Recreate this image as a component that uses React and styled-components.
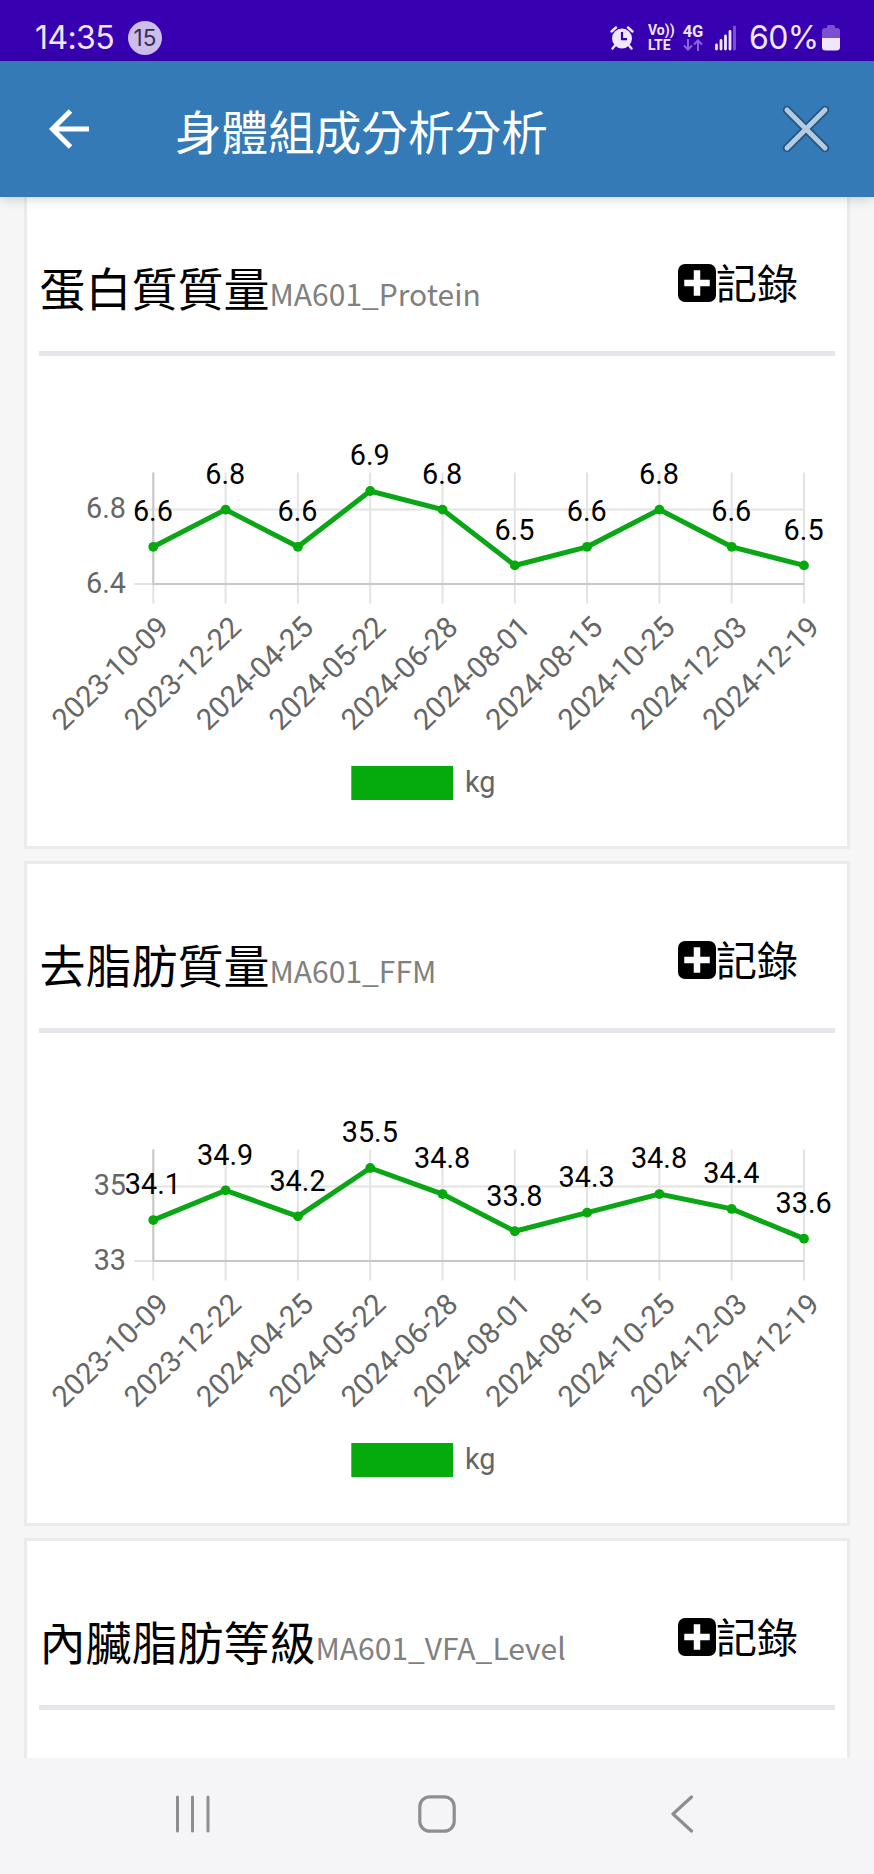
import React from "react";

import styled, { createGlobalStyle } from "styled-components";

const GlobalStyle = createGlobalStyle`
  * {
    box-sizing: border-box;
  }
  body {
    margin: 0;
    background-color: #f6f6f7;
    font-family: "Noto Sans CJK TC", "Noto Sans", sans-serif;
  }
`;

const Screen = styled.div`
  display: flex;
  flex-direction: column;
  width: 874px;
  height: 1874px;
  overflow: hidden;
`;

const StatusBar = styled.div`
  display: flex;
  flex: none;
  align-items: center;
  justify-content: space-between;
  height: 61px;
  padding: 15px 34px 0 35px;
  background-color: #3700b0;
  color: #f1e6ff;
  font-family: Inter, sans-serif;
`;

const StatusGroup = styled.div`
  display: flex;
  align-items: center;
`;

const Clock = styled.span`
  width: 93px;
  font-size: 32px;
  line-height: 44px;
  letter-spacing: -0.6px;
`;

const Badge = styled.span`
  width: 34px;
  height: 34px;
  border-radius: 50%;
  background-color: #cdbdec;
  color: #35304a;
  font-size: 22.5px;
  line-height: 34px;
  text-align: center;
`;

const Volte = styled.div`
  display: flex;
  flex-direction: column;
  width: 25px;
  margin-left: 14px;
  font-family: Roboto, sans-serif;
  font-size: 14px;
  font-weight: 700;
  line-height: 15px;
  white-space: nowrap;
`;

const Network = styled.div`
  display: flex;
  flex-direction: column;
  align-items: center;
  width: 22px;
  margin-left: 9px;
  font-family: Roboto, sans-serif;
  font-size: 16.5px;
  font-weight: 700;
  line-height: 14px;
`;

const Battery = styled.span`
  width: 73px;
  margin-left: 11px;
  font-size: 32px;
  line-height: 44px;
  letter-spacing: -0.6px;
`;

const AppBar = styled.div`
  position: relative;
  z-index: 1;
  display: flex;
  flex: none;
  align-items: center;
  height: 136px;
  padding: 0 43px 0 48px;
  background-color: #337ab7;
  box-shadow: 0 1px 12px rgba(0, 0, 0, 0.2);
`;

const AppTitle = styled.h1`
  flex: 1;
  margin: 2px 0 0 85px;
  color: white;
  font-size: 46.6px;
  font-weight: 400;
  line-height: 60px;
`;

const Content = styled.div`
  flex: 1;
  min-height: 0;
  overflow: hidden;
`;

/* scrolled a little, so the first card runs under the app bar */
const CardList = styled.div`
  display: flex;
  flex-direction: column;
  gap: 12px;
  margin-top: -13px;
  padding: 0 24px;
`;

const Card = styled.div`
  flex: none;
  height: 665px;
  padding: 0 12px;
  border: solid 3px #ebebed;
  background-color: white;
`;

const CardHead = styled.div`
  display: flex;
  align-items: flex-end;
  justify-content: space-between;
  height: 169px;
  padding: 0 37px 28px 0.5px;
  border-bottom: solid 5px #e6e7ed;
`;

const CardTitle = styled.h2`
  margin: 0;
  color: black;
  font-size: 46px;
  font-weight: 400;
  line-height: 60px;
  white-space: nowrap;
  small {
    color: #808080;
    font-size: 30px;
  }
`;

const AddButton = styled.button`
  display: flex;
  align-items: center;
  margin: 0 0 15px;
  padding: 0;
  border: none;
  background: none;
  color: black;
  font-family: inherit;
  font-size: 41px;
  line-height: 54px;
  svg {
    margin-top: 3px;
  }
`;

const Chart = styled.svg`
  display: block;
  width: 796px;
  height: 480px;
  font-family: Roboto, sans-serif;
  font-size: 28.8px;
`;

const NavBar = styled.div`
  display: flex;
  flex: none;
  align-items: center;
  height: 116px;
  padding: 0 0 4px 174px;
  background-color: #f5f5f7;
`;

const NavButton = styled.div`
  width: ${(props) => props.width}px;
  line-height: 0;
`;

const dates = [
  "2023-10-09",
  "2023-12-22",
  "2024-04-25",
  "2024-05-22",
  "2024-06-28",
  "2024-08-01",
  "2024-08-15",
  "2024-10-25",
  "2024-12-03",
  "2024-12-19",
];

const cards = [
  {
    title: "蛋白質質量",
    code: "MA601_Protein",
    ticks: [6.4, 6.8],
    values: [6.6, 6.8, 6.6, 6.9, 6.8, 6.5, 6.6, 6.8, 6.6, 6.5],
  },
  {
    title: "去脂肪質量",
    code: "MA601_FFM",
    ticks: [33, 35],
    values: [34.1, 34.9, 34.2, 35.5, 34.8, 33.8, 34.3, 34.8, 34.4, 33.6],
  },
  {
    title: "內臟脂肪等級",
    code: "MA601_VFA_Level",
  },
];

const LEFT = 114.3;
const STEP = 72.3;
const BASE = 228;
const TICK = 74.4;

const LineChart = ({ ticks, values }) => {
  const [low, high] = ticks;
  const getX = (i) => LEFT + i * STEP;
  const getY = (value) => BASE - ((value - low) / (high - low)) * TICK;
  const right = getX(values.length - 1);

  return (
    <Chart viewBox="0 0 796 480">
      <g stroke="#e3e3e3" strokeWidth="2">
        {dates.map((date, i) => (
          <line key={date} x1={getX(i)} x2={getX(i)} y1={BASE - 111.5} y2={BASE + 19.5} />
        ))}
        <line x1={LEFT - 19} x2={right} y1={BASE - TICK} y2={BASE - TICK} />
        <line x1={LEFT - 19} x2={right} y1={BASE} y2={BASE} />
      </g>
      <path
        d={`M${LEFT} ${BASE - 111.5}V${BASE}H${right}`}
        fill="none"
        stroke="#c8c8c8"
        strokeWidth="2"
      />
      <g fill="#666" textAnchor="end">
        {ticks.map((tick) => (
          <text key={tick} x="87" y={getY(tick) + 8.8}>
            {tick}
          </text>
        ))}
        {dates.map((date, i) => (
          <text
            key={date}
            fontSize="29.3"
            transform={`translate(${getX(i) + 17.2} ${BASE + 45.3}) rotate(-43.8)`}
          >
            {date}
          </text>
        ))}
      </g>
      <polyline
        points={values.map((value, i) => `${getX(i)},${getY(value)}`).join(" ")}
        fill="none"
        stroke="#0aa616"
        strokeWidth="5"
      />
      {values.map((value, i) => (
        <g key={dates[i]}>
          <circle cx={getX(i)} cy={getY(value)} r="4.9" fill="#05a90c" />
          <text x={getX(i) - 0.4} y={getY(value) - 25.6} textAnchor="middle">
            {value.toFixed(1)}
          </text>
        </g>
      ))}
      <rect x="312.3" y="410" width="101.7" height="34" fill="#05aa0d" />
      <text x="426" y="435.8" fill="#666">
        kg
      </text>
    </Chart>
  );
};

const PlusIcon = () => (
  <svg width="38" height="38" viewBox="0 0 38 38">
    <rect width="38" height="38" rx="7" />
    <path d="M19 9.5v19M9.500 19h19" stroke="white" strokeWidth="6.5" strokeLinecap="square" />
  </svg>
);

const AlarmIcon = () => (
  <svg width="24" height="24" viewBox="0 0 24 24">
    <circle cx="12" cy="12.5" r="10" fill="currentColor" />
    <path
      d="M1.5 5.5L6 1.5M22.5 5.5L18 1.5M5 19.5L2.5 22.5M19 19.5L21.5 22.5"
      stroke="currentColor"
      strokeWidth="2.4"
      strokeLinecap="round"
    />
    <path d="M12 6v7.2h5" fill="none" stroke="#3700b0" strokeWidth="2.2" />
  </svg>
);

const DataArrows = () => (
  <svg width="20" height="12" viewBox="0 0 20 12" fill="none" stroke="#8c63dd" strokeWidth="2">
    <path d="M5 0v10.500M1 6.500l4 4 4-4M15 12V1.500M11 5.500l4-4 4 4" />
  </svg>
);

const SignalIcon = styled.svg`
  margin-left: 10px;
`;

const Signal = () => (
  <SignalIcon width="24" height="26" viewBox="0 0 24 26">
    <path
      d="M2.5 20v4M7 15.5v8.5M11.5 11v13M16 6.5v17.5"
      stroke="currentColor"
      strokeWidth="2.8"
      strokeLinecap="round"
    />
    <path d="M20.5 2v22" stroke="#7f55d6" strokeWidth="2.8" strokeLinecap="round" />
  </SignalIcon>
);

const BatteryIcon = () => (
  <svg width="18" height="26" viewBox="0 0 18 26">
    <path d="M5 1.5Q5 0 6.500 0H11.500Q13 0 13 1.500V3H15Q18 3 18 6V13H0V6Q0 3 3 3H5Z" fill="#7c4fd0" />
    <path d="M0 13H18V22Q18 25.500 14.500 25.500H3.500Q0 25.500 0 22Z" fill="#f1e6ff" />
  </svg>
);

const BackArrow = () => (
  <svg width="42" height="40" viewBox="0 0 42 40" fill="none" stroke="white" strokeWidth="5">
    <path d="M22.500 2L4.500 20L22.500 38M4 20H41" />
  </svg>
);

const CloseIcon = () => (
  <svg width="50" height="50" viewBox="0 0 50 50" fill="none" strokeLinecap="round">
    <path d="M6 6L44 44M44 6L6 44" stroke="#28557f" strokeWidth="8.6" />
    <path d="M6 6L44 44M44 6L6 44" stroke="#b3cce2" strokeWidth="5" />
  </svg>
);

const App = () => {
  return (
    <Screen>
      <GlobalStyle />
      <StatusBar>
        <StatusGroup>
          <Clock>14:35</Clock>
          <Badge>15</Badge>
        </StatusGroup>
        <StatusGroup>
          <AlarmIcon />
          <Volte>
            <span>Vo))</span>
            <span>LTE</span>
          </Volte>
          <Network>
            4G
            <DataArrows />
          </Network>
          <Signal />
          <Battery>60%</Battery>
          <BatteryIcon />
        </StatusGroup>
      </StatusBar>
      <AppBar>
        <BackArrow />
        <AppTitle>身體組成分析分析</AppTitle>
        <CloseIcon />
      </AppBar>
      <Content>
        <CardList>
          {cards.map((card) => (
            <Card key={card.code}>
              <CardHead>
                <CardTitle>
                  {card.title}
                  <small>{card.code}</small>
                </CardTitle>
                <AddButton>
                  <PlusIcon />
                  記錄
                </AddButton>
              </CardHead>
              {card.values && <LineChart ticks={card.ticks} values={card.values} />}
            </Card>
          ))}
        </CardList>
      </Content>
      <NavBar>
        <NavButton width={244}>
          <svg width="38" height="38" viewBox="0 0 38 38" stroke="#8e8e90" strokeWidth="3" strokeLinecap="round">
            <path d="M3.500 2v34M18.500 2v34M34 2v34" />
          </svg>
        </NavButton>
        <NavButton width={252}>
          <svg width="38" height="38" viewBox="0 0 38 38" fill="none" stroke="#8e8e90" strokeWidth="3.2">
            <rect x="1.800" y="1.800" width="34.400" height="34.400" rx="10" />
          </svg>
        </NavButton>
        <NavButton width={24}>
          <svg width="24" height="38" viewBox="0 0 24 38" fill="none" stroke="#8e8e90" strokeWidth="3.2" strokeLinecap="round" strokeLinejoin="round">
            <path d="M21.500 2L3 19L21.500 36" />
          </svg>
        </NavButton>
      </NavBar>
    </Screen>
  );
};

export default App;
